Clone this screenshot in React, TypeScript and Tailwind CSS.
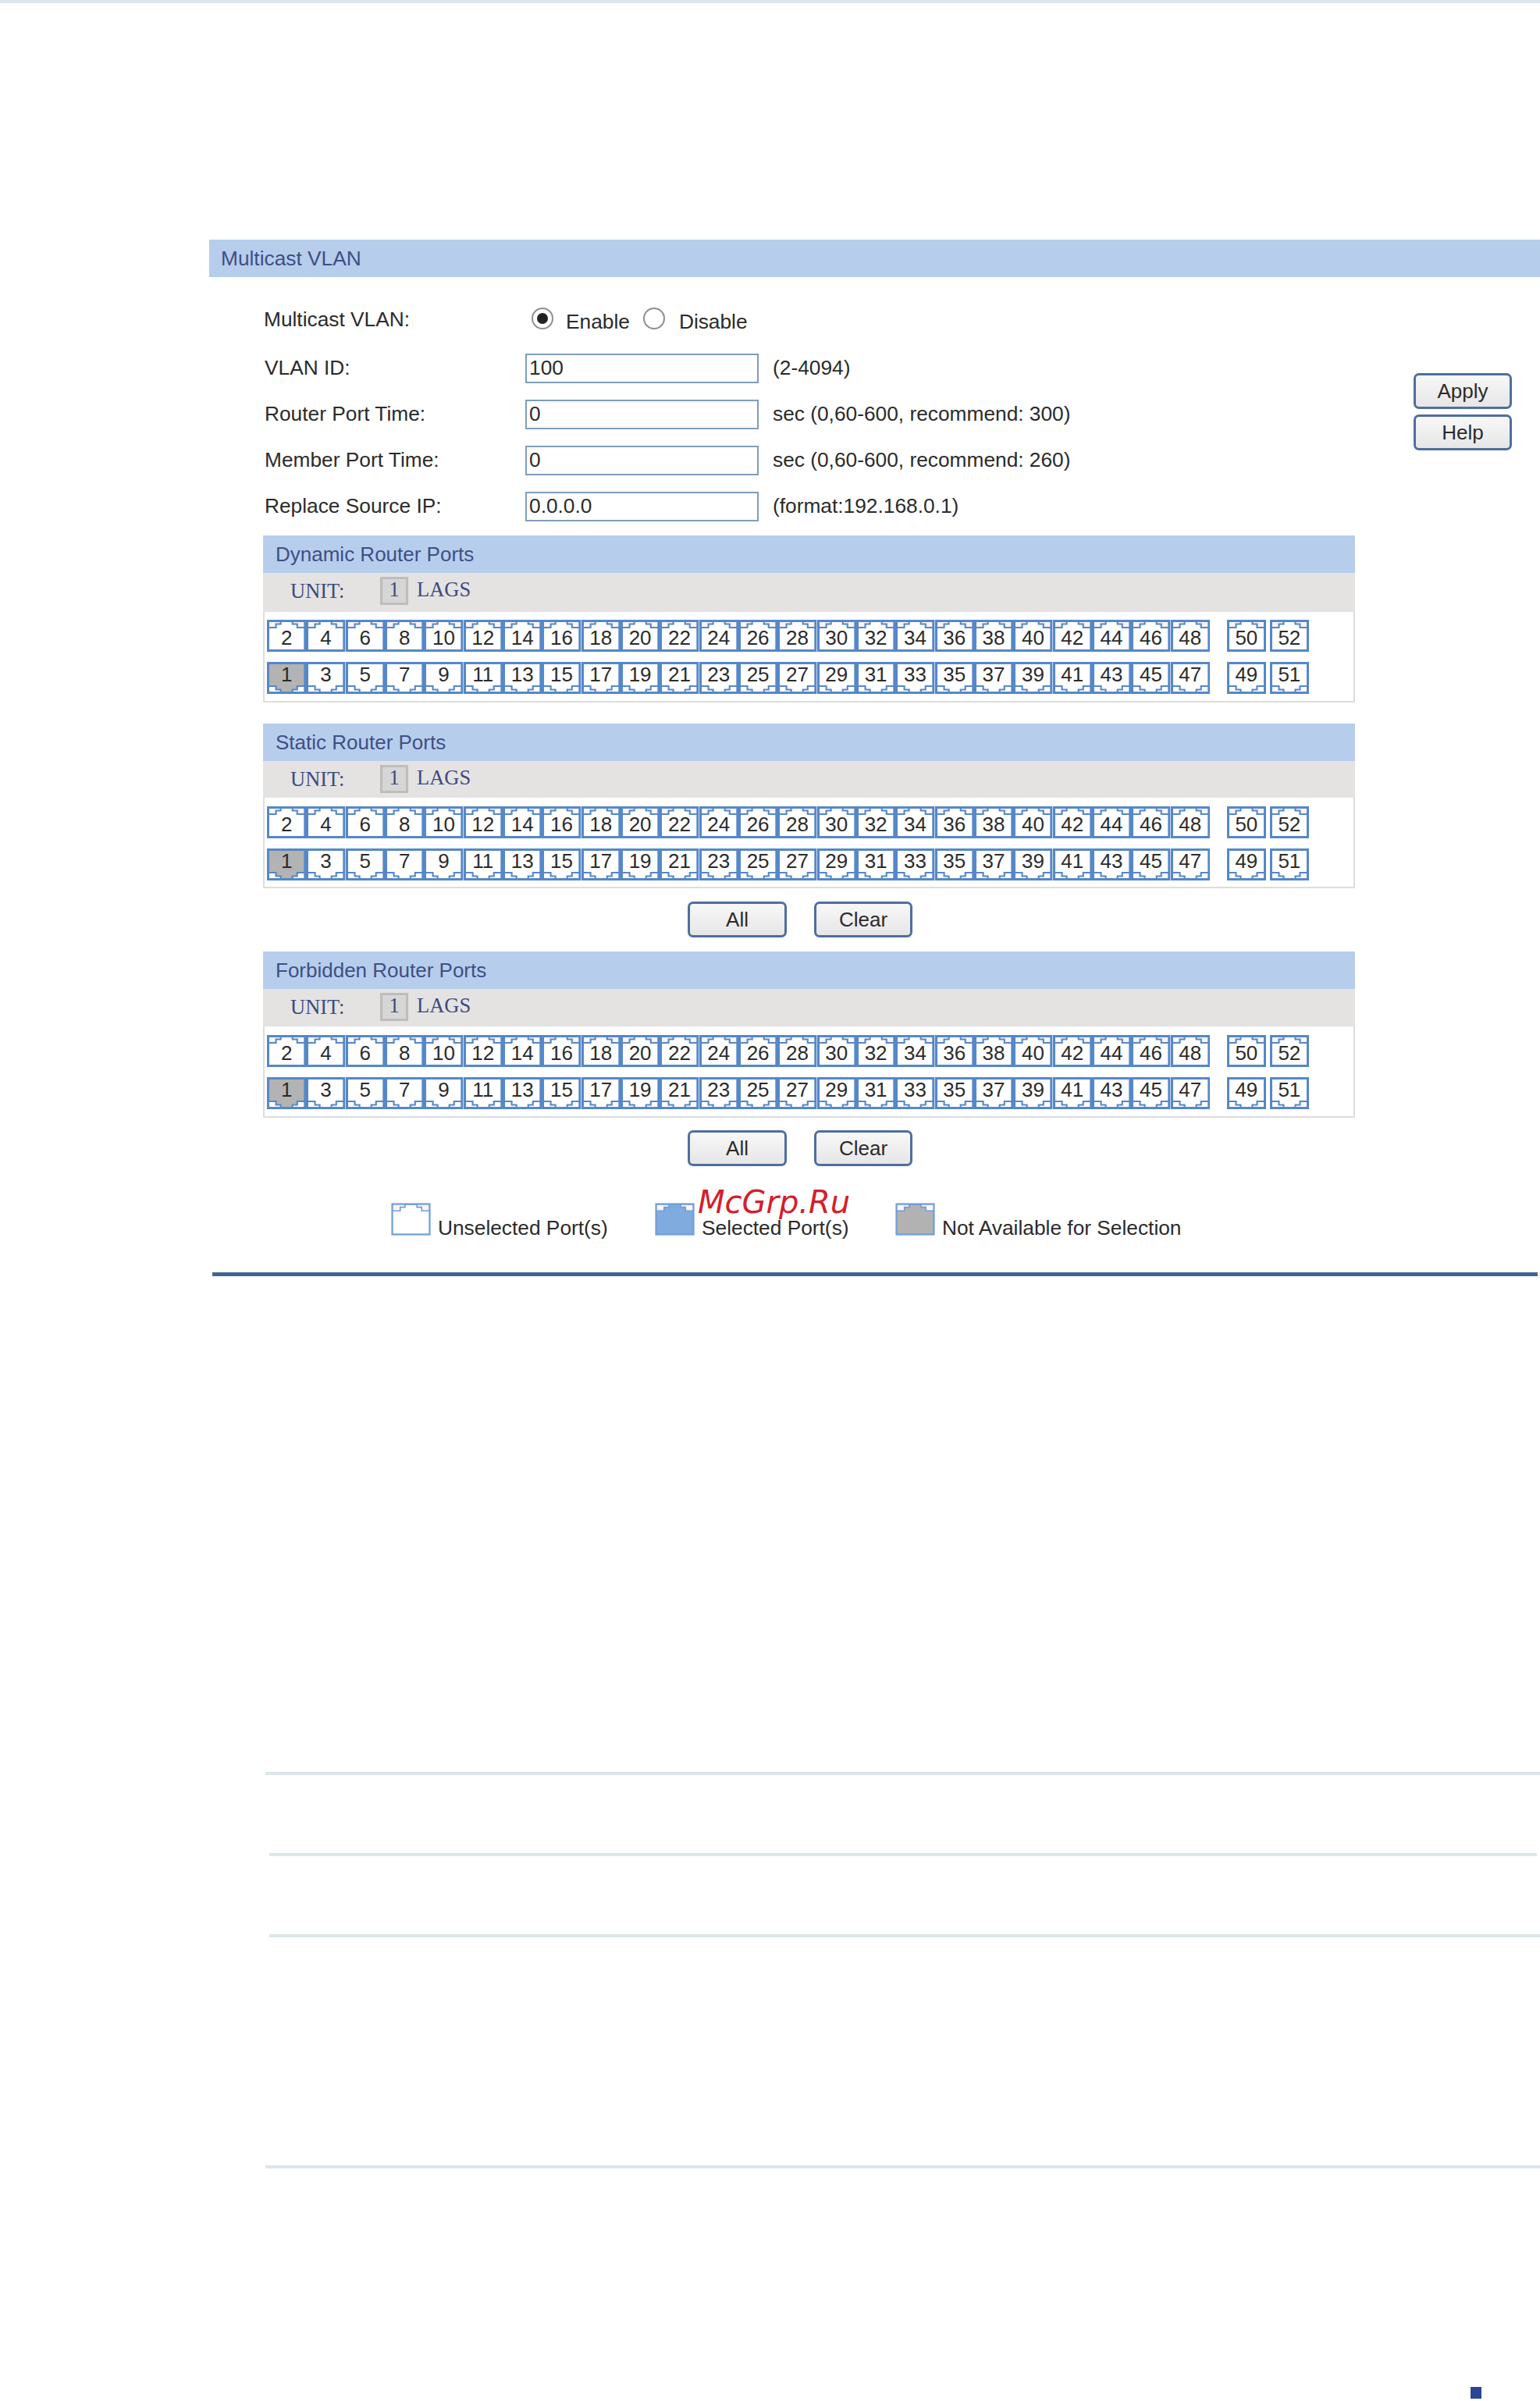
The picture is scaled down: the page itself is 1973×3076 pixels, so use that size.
const evenPorts = Array.from({ length: 24 }, (_, i) => (i + 1) * 2);
const oddPorts = Array.from({ length: 24 }, (_, i) => i * 2 + 1);

const formRows = [
  { label: "VLAN ID:", value: "100", hint: "(2-4094)" },
  { label: "Router Port Time:", value: "0", hint: "sec (0,60-600, recommend: 300)" },
  { label: "Member Port Time:", value: "0", hint: "sec (0,60-600, recommend: 260)" },
  { label: "Replace Source IP:", value: "0.0.0.0", hint: "(format:192.168.0.1)" },
];

function PortShape({
  fill = "#ffffff",
  corner = "#fdf3f6",
  stroke = "#5588c8",
  strokeWidth = 3,
  flip = false,
}: {
  fill?: string;
  corner?: string;
  stroke?: string;
  strokeWidth?: number;
  flip?: boolean;
}) {
  return (
    <svg
      viewBox="0 0 50 41"
      preserveAspectRatio="none"
      className="absolute inset-0 h-full w-full"
    >
      <g transform={flip ? "matrix(1 0 0 -1 0 41)" : undefined}>
        <rect x="1.3" y="1.3" width="47.4" height="38.4" fill={fill} />
        <path d="M2 2.5H17.5V5.5H11.5V10H2Z" fill={corner} />
        <path d="M48 2.5H32.5V5.5H38.5V10H48Z" fill={corner} />
        <path
          d="M1.3 10H11.5V5.5H17.5V2H32.5V5.5H38.5V10H48.7"
          fill="none"
          stroke={stroke}
          strokeWidth={strokeWidth * 0.7}
        />
        <rect
          x="1.5"
          y="1.5"
          width="47"
          height="38"
          fill="none"
          stroke={stroke}
          strokeWidth={strokeWidth}
        />
      </g>
    </svg>
  );
}

function Port({ n, bottom, width }: { n: number; bottom?: boolean; width: string }) {
  const off = n === 1;
  return (
    <div className={`relative flex h-[41px] shrink-0 items-center justify-center text-[26px] text-[#2b2b2b] ${width}`}>
      <PortShape flip={bottom} fill={off ? "#b3b3b3" : "#ffffff"} corner={bottom ? "#ffffff" : "#fdf3f6"} />
      <span className={`relative leading-none ${bottom ? "pb-[10px]" : "pt-[5px]"}`}>{n}</span>
    </div>
  );
}

function PortRow({ ports, extra, bottom }: { ports: number[]; extra: number[]; bottom?: boolean }) {
  return (
    <div className="flex">
      {ports.map((n) => (
        <Port key={n} n={n} bottom={bottom} width="w-[50.33px]" />
      ))}
      <div className="ml-[22px] flex gap-[5px]">
        {extra.map((n) => (
          <Port key={n} n={n} bottom={bottom} width="w-[50px]" />
        ))}
      </div>
    </div>
  );
}

function PortPanel({ title, unitHeight, portsPadding }: { title: string; unitHeight: string; portsPadding: string }) {
  return (
    <section className="w-[1399px]">
      <div className="flex h-[48px] items-center bg-[#b7cdec] pl-[16px] text-[26px] text-[#3f4f85]">{title}</div>
      <div className={`flex items-start bg-[#e4e3e2] pt-[5px] pl-[35px] font-['Liberation_Serif',serif] text-[26.5px] text-[#3d4a80] ${unitHeight}`}>
        <span className="w-[115px] leading-[36px]">UNIT:</span>
        <span className="flex h-[36px] w-[36px] items-center justify-center border-[3px] border-[#bdbdbd] bg-[#d6d6d6] pb-[3px] leading-none">1</span>
        <span className="ml-[11px] leading-[32px]">LAGS</span>
      </div>
      <div className={`flex flex-col gap-[13px] border-x-2 border-b-2 border-[#dddddd] pl-[3px] ${portsPadding}`}>
        <PortRow ports={evenPorts} extra={[50, 52]} />
        <PortRow ports={oddPorts} extra={[49, 51]} bottom />
      </div>
    </section>
  );
}

function ActionButton({ children, width }: { children: string; width: string }) {
  return (
    <button className={`h-[46px] rounded-[7px] border-[3px] border-[#4f6e9e] bg-linear-to-b from-[#f8f8f8] to-[#e6e6e6] text-[26px] leading-none text-[#2b2b2b] ${width}`}>
      {children}
    </button>
  );
}

function AllClear() {
  return (
    <div className="ml-[544px] flex gap-[35px]">
      <ActionButton width="w-[127px]">All</ActionButton>
      <ActionButton width="w-[126px]">Clear</ActionButton>
    </div>
  );
}

function Radio({ checked }: { checked?: boolean }) {
  return (
    <span className="flex h-[28px] w-[28px] items-center justify-center rounded-full border-2 border-[#8f8f8f] bg-white">
      {checked && <span className="h-[14px] w-[14px] rounded-full bg-[#222222]" />}
    </span>
  );
}

function LegendItem({ label, fill, width }: { label: string; fill: string; width: string }) {
  return (
    <div className={`flex items-start gap-[9px] ${width}`}>
      <div className="relative h-[42px] w-[51px] shrink-0">
        <PortShape fill={fill} stroke="#6f9fd8" strokeWidth={2.2} />
      </div>
      <span className="mt-[17px] leading-[30px]">{label}</span>
    </div>
  );
}

export default function App() {
  return (
    <div className="min-h-[3076px] w-[1973px] overflow-hidden bg-white font-['Liberation_Sans',Arial,sans-serif] text-[26.3px] text-[#2b2b2b]">
      <div className="h-1 bg-[#dce6eb]" />

      <main className="mt-[303px] ml-[268px]">
        <div className="flex h-[48px] items-center bg-[#b7cdec] pt-[2px] pl-[15px] text-[#3f4f85]">Multicast VLAN</div>

        <div className="flex">
          <div className="ml-[69px] pt-[35px]">
            <div className="flex h-[38px] items-center pl-[1px]">
              <span className="w-[335px] pt-[2px]">Multicast VLAN:</span>
              <span className="ml-[8px] -mt-[3px]"><Radio checked /></span>
              <span className="ml-[16px] pt-[8px]">Enable</span>
              <span className="ml-[17px] -mt-[3px]"><Radio /></span>
              <span className="ml-[18px] pt-[8px]">Disable</span>
            </div>

            <div className="mt-[25px] flex flex-col gap-[21px] pl-[2px]">
              {formRows.map((r) => (
                <div key={r.label} className="flex h-[38px] items-center">
                  <label className="-mt-[1px] w-[334px]">{r.label}</label>
                  <input
                    readOnly
                    value={r.value}
                    className="h-[38px] w-[299px] border-2 border-[#7f9db9] bg-white px-[3px] text-[26.3px] text-[#2b2b2b] outline-none"
                  />
                  <span className="ml-[18px] -mt-[1px]">{r.hint}</span>
                </div>
              ))}
            </div>

            <div className="mt-[18px]">
              <PortPanel title="Dynamic Router Ports" unitHeight="h-[50px]" portsPadding="pt-[10px] pb-[9px]" />
            </div>
            <div className="mt-[27px]">
              <PortPanel title="Static Router Ports" unitHeight="h-[47px]" portsPadding="pt-[11px] pb-[8px]" />
            </div>
            <div className="mt-[17px]"><AllClear /></div>
            <div className="mt-[18px]">
              <PortPanel title="Forbidden Router Ports" unitHeight="h-[48px]" portsPadding="pt-[11px] pb-[9px]" />
            </div>
            <div className="mt-[16px]"><AllClear /></div>

            <div className="relative mt-[47px] ml-[164px] flex h-[48px]">
              <LegendItem label="Unselected Port(s)" fill="#ffffff" width="w-[338px]" />
              <LegendItem label="Selected Port(s)" fill="#7fabdf" width="w-[308px]" />
              <LegendItem label="Not Available for Selection" fill="#b2b2b2" width="w-[400px]" />
              <span className="absolute top-[-25px] left-[393px] font-['DejaVu_Sans',sans-serif] text-[40px] leading-[48px] text-[#d3202a] italic">McGrp.Ru</span>
            </div>
          </div>

          <div className="mt-[123px] ml-[75px] flex flex-col gap-[7px]">
            <ActionButton width="w-[126px]">Apply</ActionButton>
            <ActionButton width="w-[126px]">Help</ActionButton>
          </div>
        </div>

        <div className="mt-[41px] ml-[4px] h-[5px] w-[1698px] bg-[#3f6494]" />
      </main>

      <div className="mt-[635px] ml-[340px] h-1 bg-[#dce6eb]" />
      <div className="mt-[100px] ml-[345px] h-1 w-[1624px] bg-[#dce6eb]" />
      <div className="mt-[100px] ml-[345px] h-1 bg-[#dce6eb]" />
      <div className="mt-[292px] ml-[340px] h-1 bg-[#dce6eb]" />
      <div className="mt-[280px] ml-[1884px] h-[15px] w-[14px] bg-[#2b4496]" />
    </div>
  );
}
